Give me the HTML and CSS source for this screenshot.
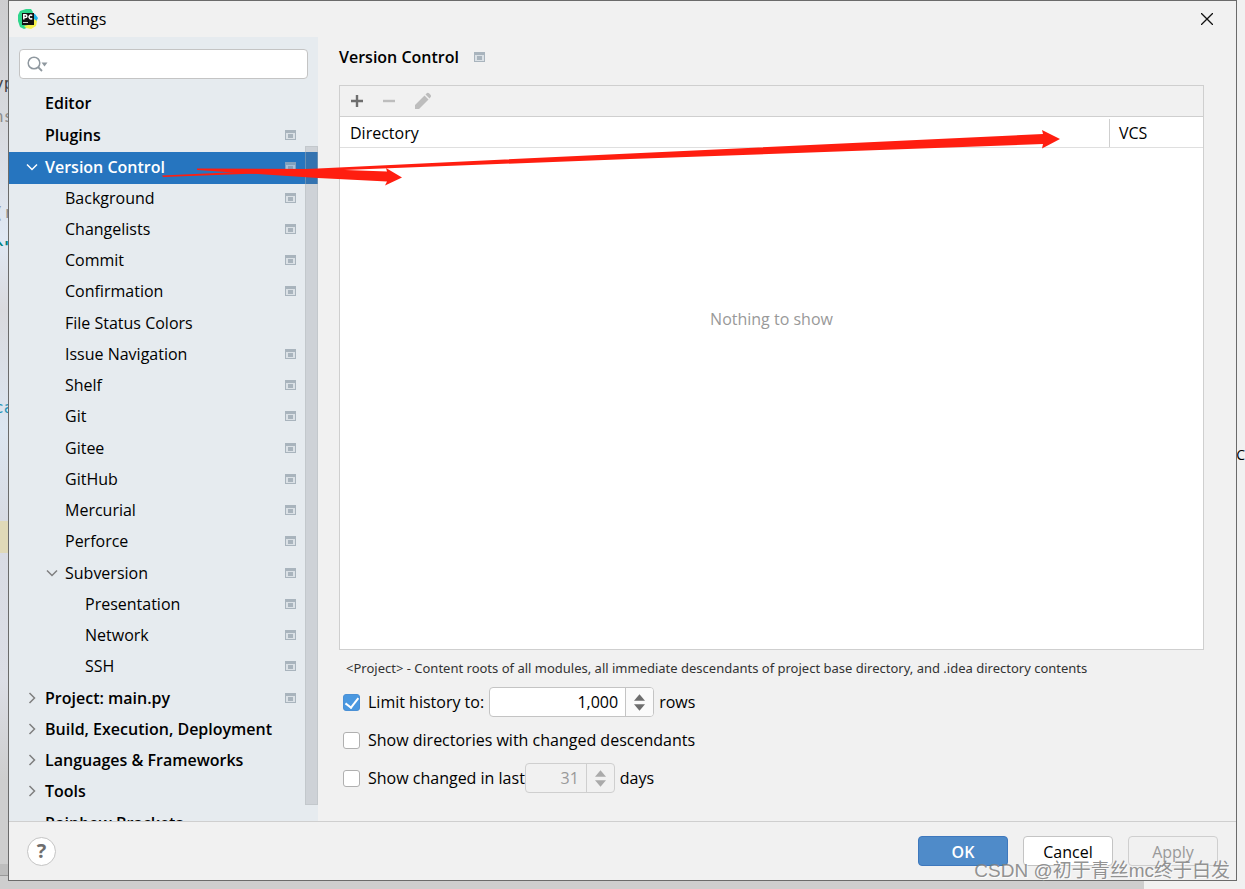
FILE: index.html
```html
<!DOCTYPE html>
<html lang="en">
<head>
<meta charset="utf-8">
<title>Settings</title>
<link rel="stylesheet" href="styles.css">
</head>
<body>
<svg class="defs" width="0" height="0" aria-hidden="true">
  <symbol id="project" viewBox="0 0 12 12"><path fill="#a9b4bd" d="M0 1h11v10H0z"/><path fill="#dbe1e6" d="M1 4h9v6H1z"/><path fill="#a9b4bd" d="M3 5h5v4H3z"/></symbol>
  <symbol id="down" viewBox="0 0 12 12"><path d="M1 3.5l5 5 5-5" fill="none" stroke="currentColor" stroke-width="1.5"/></symbol>
  <symbol id="right" viewBox="0 0 12 12"><path d="M3.5 1l5 5-5 5" fill="none" stroke="currentColor" stroke-width="1.5"/></symbol>
  <symbol id="triangle-up" viewBox="0 0 12 7"><path d="M0 7l6-7 6 7z" fill="currentColor"/></symbol>
  <symbol id="triangle-down" viewBox="0 0 12 7"><path d="M0 0l6 7 6-7z" fill="currentColor"/></symbol>
</svg>
<div class="backdrop" aria-hidden="true">
  <span class="code code-type">yp</span>
  <span class="code code-ns">ns</span>
  <span class="code code-r">(r</span>
  <span class="code code-quote">^"</span>
  <span class="code code-ca">ca</span>
  <span class="code-line"></span>
  <span class="status-bar"></span>
  <span class="bottom-right"></span>
  <span class="edge-letter">C</span>
</div>
<main class="dialog">
  <header class="titlebar">
    <svg class="logo" width="20" height="20" viewBox="0 0 20 20" aria-hidden="true">
      <path fill="#2fd68c" d="M0 6L2 2l6-2h5l2 3-4 15-5 2-4-2-2-6z"/>
      <path fill="#1fb5ea" d="M14 4l3 1 3 4-2 4-5-2z"/>
      <path fill="#f3f04b" d="M16 10l3 2-1 5-5 3-5-1-2-2 8-2z"/>
      <path fill="#111" d="M4 4h12v12H4z"/>
      <path fill="none" stroke="#fff" stroke-width="1.5" d="M5.800 10.500V5.800h1.700a1.300 1.300 0 010 2.800H6M14.200 6.600a1.900 1.900 0 10 0 2.800"/>
      <path stroke="#ccc" d="M5 13.500h5"/>
    </svg>
    <h1 class="title">Settings</h1>
    <button class="close" type="button" aria-label="Close"><svg width="12" height="12" viewBox="0 0 12 12"><path d="M0 0l12 12M12 0L0 12" stroke="#111" stroke-width="1.3"/></svg></button>
  </header>
  <div class="content">
    <nav class="sidebar" aria-label="Settings sections">
      <div class="search">
        <svg width="22" height="16" viewBox="0 0 22 16" aria-hidden="true"><circle cx="7" cy="7" r="5.8" fill="none" stroke="#8f989f" stroke-width="1.5"/><path d="M11 11l4 4" stroke="#8f989f" stroke-width="1.8"/><path d="M14.500 6.500h6l-3 4z" fill="#8f989f"/></svg>
        <input type="text" aria-label="Search settings">
      </div>
      <ul class="tree">
        <li><button class="row top" type="button"><span class="arrow"></span><span class="name">Editor</span></button></li>
        <li><button class="row top" type="button"><span class="arrow"></span><span class="name">Plugins</span><svg class="badge"><use href="#project"/></svg></button></li>
        <li><button class="row top selected" type="button" aria-current="page"><svg class="arrow"><use href="#down"/></svg><span class="name">Version Control</span><svg class="badge"><use href="#project"/></svg></button></li>
        <li><button class="row child" type="button"><span class="name">Background</span><svg class="badge"><use href="#project"/></svg></button></li>
        <li><button class="row child" type="button"><span class="name">Changelists</span><svg class="badge"><use href="#project"/></svg></button></li>
        <li><button class="row child" type="button"><span class="name">Commit</span><svg class="badge"><use href="#project"/></svg></button></li>
        <li><button class="row child" type="button"><span class="name">Confirmation</span><svg class="badge"><use href="#project"/></svg></button></li>
        <li><button class="row child" type="button"><span class="name">File Status Colors</span></button></li>
        <li><button class="row child" type="button"><span class="name">Issue Navigation</span><svg class="badge"><use href="#project"/></svg></button></li>
        <li><button class="row child" type="button"><span class="name">Shelf</span><svg class="badge"><use href="#project"/></svg></button></li>
        <li><button class="row child" type="button"><span class="name">Git</span><svg class="badge"><use href="#project"/></svg></button></li>
        <li><button class="row child" type="button"><span class="name">Gitee</span><svg class="badge"><use href="#project"/></svg></button></li>
        <li><button class="row child" type="button"><span class="name">GitHub</span><svg class="badge"><use href="#project"/></svg></button></li>
        <li><button class="row child" type="button"><span class="name">Mercurial</span><svg class="badge"><use href="#project"/></svg></button></li>
        <li><button class="row child" type="button"><span class="name">Perforce</span><svg class="badge"><use href="#project"/></svg></button></li>
        <li><button class="row branch" type="button"><svg class="arrow"><use href="#down"/></svg><span class="name">Subversion</span><svg class="badge"><use href="#project"/></svg></button></li>
        <li><button class="row leaf" type="button"><span class="name">Presentation</span><svg class="badge"><use href="#project"/></svg></button></li>
        <li><button class="row leaf" type="button"><span class="name">Network</span><svg class="badge"><use href="#project"/></svg></button></li>
        <li><button class="row leaf" type="button"><span class="name">SSH</span><svg class="badge"><use href="#project"/></svg></button></li>
        <li><button class="row top" type="button"><svg class="arrow"><use href="#right"/></svg><span class="name">Project: main.py</span><svg class="badge"><use href="#project"/></svg></button></li>
        <li><button class="row top" type="button"><svg class="arrow"><use href="#right"/></svg><span class="name">Build, Execution, Deployment</span></button></li>
        <li><button class="row top" type="button"><svg class="arrow"><use href="#right"/></svg><span class="name">Languages &amp; Frameworks</span></button></li>
        <li><button class="row top" type="button"><svg class="arrow"><use href="#right"/></svg><span class="name">Tools</span></button></li>
        <li><button class="row top" type="button"><span class="arrow"></span><span class="name">Rainbow Brackets</span></button></li>
      </ul>
      <span class="scrollbar"></span>
    </nav>
    <section class="page">
      <div class="heading"><h2>Version Control</h2><svg class="badge"><use href="#project"/></svg></div>
      <div class="panel">
        <div class="toolbar">
          <button type="button" aria-label="Add"><svg width="14" height="14" viewBox="0 0 14 14"><path d="M7 1v12M1 7h12" stroke="#6e6e6e" stroke-width="2.400"/></svg></button>
          <button type="button" aria-label="Remove" disabled><svg width="14" height="14" viewBox="0 0 14 14"><path d="M1 7h12" stroke="#bdbdbd" stroke-width="2.400"/></svg></button>
          <button type="button" aria-label="Edit" disabled><svg width="18" height="18" viewBox="0 0 18 18"><path fill="#bdbdbd" d="M1 17v-4L10.500 3.500l4 4L5 17zM11.500 2.500l1.500-1.500q1-.6 2 .3L16.700 3q.8 1 0 2l-1.200 1.500z"/></svg></button>
        </div>
        <table class="mappings">
          <thead><tr><th scope="col">Directory</th><th scope="col" class="vcs"><span>VCS</span></th></tr></thead>
        </table>
        <p class="empty">Nothing to show</p>
      </div>
      <p class="hint">&lt;Project&gt; - Content roots of all modules, all immediate descendants of project base directory, and .idea directory contents</p>
      <div class="options">
        <div class="option">
          <input class="check" type="checkbox" id="limit" checked><label for="limit">Limit history to:</label>
          <span class="spinner wide"><input type="text" value="1,000" aria-label="History rows"><span class="steps"><button type="button" aria-label="More rows"><svg><use href="#triangle-up"/></svg></button><button type="button" aria-label="Fewer rows"><svg><use href="#triangle-down"/></svg></button></span></span>
          <span class="unit">rows</span>
        </div>
        <div class="option">
          <input class="check" type="checkbox" id="dirs"><label for="dirs">Show directories with changed descendants</label>
        </div>
        <div class="option">
          <input class="check" type="checkbox" id="changed"><label class="tight" for="changed">Show changed in last</label>
          <span class="spinner off"><input type="text" value="31" aria-label="Days" disabled><span class="steps"><button type="button" aria-label="More days" disabled><svg><use href="#triangle-up"/></svg></button><button type="button" aria-label="Fewer days" disabled><svg><use href="#triangle-down"/></svg></button></span></span>
          <span class="unit">days</span>
        </div>
      </div>
    </section>
  </div>
  <footer class="footer">
    <button class="help" type="button" aria-label="Help">?</button>
    <button class="action primary" type="button">OK</button>
    <button class="action" type="button">Cancel</button>
    <button class="action" type="button" disabled>Apply</button>
  </footer>
</main>
<svg class="annotation" width="1245" height="889" viewBox="0 0 1245 889" aria-hidden="true">
  <path fill="#ff1e10" d="M162 175.500L318 168.500 630 153.500 1043 134 1042 130 1060 139 1042 148.500 1043 144 630 159 318 171 163 177z"/>
  <path fill="#ff1e10" d="M197 168.500L318 169 387 171.500 386 168 402 177.500 385 185.500 387 181.500 318 178 197 170z"/>
</svg>
<span class="watermark">CSDN @初于青丝mc终于白发</span>
</body>
</html>
```
FILE: styles.css
```css
* { box-sizing: border-box; }
body {
  margin: 0;
  height: 100vh;
  padding: 0 8px 8px;
  position: relative;
  overflow: hidden;
  font: 16px/20px "Open Sans", "Noto Sans", sans-serif;
  color: #000;
  background: #f1f1f1;
}
button, input { font: inherit; color: inherit; }
button { border: 0; padding: 0; background: none; }
h1, h2, p, ul { margin: 0; padding: 0; }
svg { flex: none; display: block; }
.defs { position: absolute; }

.backdrop {
  position: absolute;
  inset: 0;
  overflow: hidden;
  background: linear-gradient(#cdcdcf 0, #d9dbe0 130px, #e0e8f4 240px, #dadade 310px, #dce6f1 430px, #d8dbe3 520px, #dcdee6 680px, #cecece 780px);
}
.code { position: absolute; left: -6px; font: 16px/20px "DejaVu Sans Mono", monospace; color: #8c8c8c; }
.code-type { top: 74px; color: #444; }
.code-ns { top: 107px; }
.code-r { top: 203px; }
.code-quote { top: 238px; color: #008080; font-weight: bold; }
.code-ca { top: 398px; color: #1e93b8; }
.code-line { position: absolute; left: 0; top: 521px; width: 9px; height: 32px; background: #e0d9b8; }
.status-bar { position: absolute; left: 0; bottom: 13px; width: 9px; height: 12px; background: #bdbdbd; border-bottom: 1px solid #999; }
.bottom-right { position: absolute; left: 1144px; right: 0; bottom: 0; top: 0; background: #f1f1f1; }
.edge-letter { position: absolute; right: 0; top: 445px; font-size: 14px; }

.dialog {
  position: relative;
  height: 100%;
  display: flex;
  flex-direction: column;
  border: 1px solid #6b6b6b;
  background: #f1f1f1;
}
.titlebar { flex: none; height: 36px; display: flex; align-items: center; padding: 0 23px 0 9px; gap: 9px; }
.title { font-size: 16px; font-weight: 400; flex: 1; }
.content { flex: 1; min-height: 0; display: flex; }

.sidebar { position: relative; flex: none; width: 309px; display: flex; flex-direction: column; background: #e6ebef; }
.search {
  flex: none;
  display: flex;
  align-items: center;
  height: 30px;
  margin: 12px 10px 9px;
  padding: 0 6px 0 7px;
  border: 1px solid #c4c4c4;
  border-radius: 4px;
  background: #fff;
}
.search input { flex: 1; min-width: 0; border: 0; outline: 0; background: none; }
.tree { flex: 1; min-height: 0; overflow: hidden; list-style: none; }
.row { display: flex; align-items: center; width: 100%; height: 31px; padding: 0 21px 2px 0; text-align: left; }
li:nth-child(-n+2) .row, li:nth-child(4n+3) .row { height: 32px; }
.name { flex: 1; white-space: nowrap; }
.arrow { flex: none; width: 12px; height: 12px; margin-right: 7px; color: #7f7f7f; }
.top { padding-left: 17px; font-weight: 600; }
.branch { padding-left: 37px; }
.child { padding-left: 56px; }
.leaf { padding-left: 76px; }
.selected { margin-bottom: -1px; background: #2675bf; color: #fff; }
.selected .arrow { color: #fff; }
.badge { width: 12px; height: 12px; }
.selected .badge { opacity: .7; }
.scrollbar { position: absolute; right: 0; top: 109px; bottom: 16px; width: 13px; background: #6e6e7733; border: 1px solid #b4b8bc66; }

.page { flex: 1; min-width: 0; display: flex; flex-direction: column; padding: 10px 32px 28px 21px; }
.heading { flex: none; display: flex; align-items: center; gap: 15px; height: 20px; }
h2 { font-size: 16px; font-weight: 600; }
.panel { flex: 1; min-height: 0; display: flex; flex-direction: column; margin-top: 18px; border: 1px solid #cfcfcf; background: #fff; }
.toolbar { flex: none; display: flex; align-items: center; gap: 18px; height: 31px; padding: 0 10px; border-bottom: 1px solid #cfcfcf; background: #f1f1f1; }
.mappings { width: 100%; border-spacing: 0; table-layout: fixed; }
.mappings th { height: 31px; padding: 2px 0 0 10px; text-align: left; font-weight: 400; border-bottom: 1px solid #dfdfdf; }
.mappings .vcs { width: 94px; padding-left: 0; }
.vcs span { display: block; padding-left: 9px; line-height: 28px; border-left: 1px solid #cfcfcf; }
.empty { padding-top: 161px; text-align: center; color: #999; }
.hint { padding: 8px 0 9px 7px; font: 13px/20px "Noto Sans", sans-serif; color: #333; }
.options { display: flex; flex-direction: column; gap: 8px; padding-left: 4px; }
.option { display: flex; align-items: center; height: 30px; }
.check { appearance: none; flex: none; width: 17px; height: 17px; margin: 0 8px 0 0; border: 1px solid #b0b0b0; border-radius: 3px; background: #fff; }
.check:checked { border-color: #4a90d5; background: #4a98e0; display: grid; place-items: center; }
.check:checked::before { content: ""; width: 6px; height: 11px; margin-bottom: 3px; border: solid #fff; border-width: 0 2px 2px 0; transform: rotate(38deg); }
.option label { margin-right: 5px; }
.option .tight { margin-right: 0; }
.spinner { display: flex; width: 90px; height: 30px; border: 1px solid #c4c4c4; border-radius: 4px; background: #fff; overflow: hidden; }
.wide { width: 165px; }
.spinner input { flex: 1; min-width: 0; padding: 0 7px; border: 0; outline: 0; background: none; text-align: right; }
.steps { width: 28px; display: flex; flex-direction: column; align-items: center; justify-content: center; gap: 3px; border-left: 1px solid #c4c4c4; background: #fafafa; color: #6e6e6e; }
.steps svg { width: 11px; height: 7px; }
.off { background: #f1f1f1; border-color: #cfcfcf; color: #999; }
.off .steps { border-color: #cfcfcf; background: none; color: #aaa; }
.unit { margin-left: 5px; }

.footer { flex: none; display: flex; align-items: center; gap: 15px; height: 59px; padding: 0 18px; border-top: 1px solid #cfcfcf; }
.help { width: 29px; height: 29px; margin-right: auto; border: 1px solid #c4c4c4; border-radius: 50%; background: #fff; color: #6e6e6e; font-size: 20px; font-weight: 700; }
.action { width: 90px; height: 30px; padding-top: 2px; border: 1px solid #c4c4c4; border-radius: 4px; background: #fff; }
.action.primary { border-color: #3e78bd; background: #4f8bc9; color: #fff; font-weight: 600; }
.action:disabled { border-color: #cfcfcf; background: none; color: #999; }

.annotation { position: absolute; left: 0; top: 0; pointer-events: none; }
.watermark {
  position: absolute;
  right: 15px;
  bottom: 5px;
  font: 19px/26px "Liberation Sans", "Noto Sans CJK SC", sans-serif;
  color: #808080dd;
  text-shadow: 1px 1px #ffffffb0;
  white-space: nowrap;
}
```
